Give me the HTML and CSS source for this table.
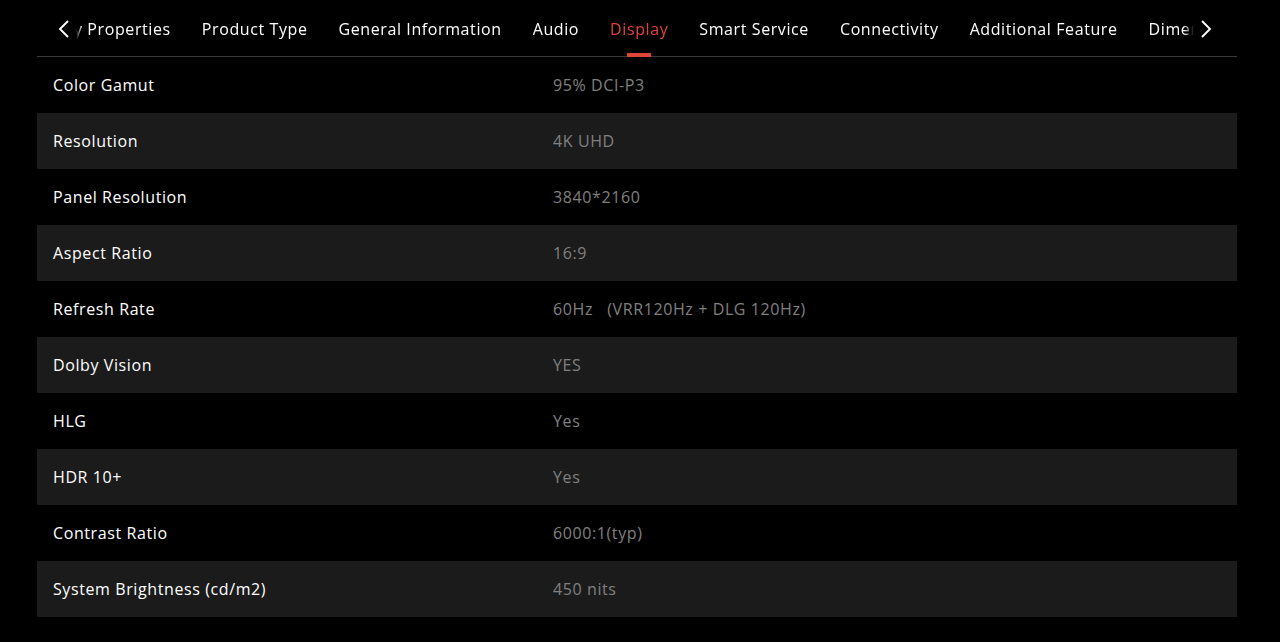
FILE: index.html
```html
<!DOCTYPE html>
<html lang="en">
<head>
<meta charset="utf-8">
<title>Specs - Display</title>
<link rel="stylesheet" href="styles.css">
</head>
<body>
<div class="specs">
  <nav class="tabs">
    <button class="arrow" aria-label="Previous">
      <svg width="14" height="20" viewBox="0 0 14 20"><path d="M11 2 L3 10 L11 18" fill="none" stroke="#fff" stroke-width="1.9"/></svg>
    </button>
    <div class="viewport">
      <ul class="tab-list">
        <li class="tab">Key Properties</li>
        <li class="tab">Product Type</li>
        <li class="tab">General Information</li>
        <li class="tab">Audio</li>
        <li class="tab active">Display</li>
        <li class="tab">Smart Service</li>
        <li class="tab">Connectivity</li>
        <li class="tab">Additional Feature</li>
        <li class="tab">Dimensions</li>
      </ul>
    </div>
    <button class="arrow" aria-label="Next">
      <svg width="14" height="20" viewBox="0 0 14 20"><path d="M3 2 L11 10 L3 18" fill="none" stroke="#fff" stroke-width="1.9"/></svg>
    </button>
  </nav>
  <div class="table">
    <div class="row"><div class="label">Color Gamut</div><div class="value">95% DCI-P3</div></div>
    <div class="row"><div class="label">Resolution</div><div class="value">4K UHD</div></div>
    <div class="row"><div class="label">Panel Resolution</div><div class="value">3840*2160</div></div>
    <div class="row"><div class="label">Aspect Ratio</div><div class="value">16:9</div></div>
    <div class="row"><div class="label">Refresh Rate</div><div class="value">60Hz&nbsp;&nbsp;&nbsp;(VRR120Hz + DLG 120Hz)</div></div>
    <div class="row"><div class="label">Dolby Vision</div><div class="value">YES</div></div>
    <div class="row"><div class="label">HLG</div><div class="value">Yes</div></div>
    <div class="row"><div class="label">HDR 10+</div><div class="value">Yes</div></div>
    <div class="row"><div class="label">Contrast Ratio</div><div class="value">6000:1(typ)</div></div>
    <div class="row"><div class="label">System Brightness (cd/m2)</div><div class="value">450 nits</div></div>
  </div>
</div>
</body>
</html>
```

FILE: styles.css
```css
html, body {
  margin: 0;
  padding: 0;
  background: #000;
}
body {
  font-family: "Open Sans", "Liberation Sans", sans-serif;
  font-size: 16px;
  letter-spacing: 0.6px;
  color: #fff;
  overflow: hidden;
}
.specs {
  width: 1200px;
  margin-left: 37px;
}
.tabs {
  display: flex;
  align-items: center;
  height: 57px;
  border-bottom: 1px solid #3a3a3a;
  box-sizing: border-box;
  padding-left: 15px;
}
.arrow {
  flex: none;
  width: 24px;
  height: 57px;
  padding: 0;
  border: 0;
  background: transparent;
  display: flex;
  align-items: center;
  justify-content: center;
  cursor: pointer;
}
.arrow svg {
  margin-top: 2px;
}
.viewport {
  flex: none;
  width: 1118px;
  height: 57px;
  overflow: hidden;
  -webkit-mask-image: linear-gradient(to right, transparent 0, #000 6px, #000 1108px, transparent 1118px);
  mask-image: linear-gradient(to right, transparent 0, #000 6px, #000 1108px, transparent 1118px);
}
.tab-list {
  list-style: none;
  margin: 0;
  padding: 0;
  display: flex;
  gap: 31px;
  height: 57px;
  transform: translateX(-22px);
}
.tab {
  position: relative;
  flex: none;
  white-space: nowrap;
  line-height: 57px;
  height: 57px;
  padding-top: 1px;
  box-sizing: border-box;
  font-size: 16px;
  color: #fff;
}
.tab.active {
  color: #e0443a;
}
.tab.active::after {
  content: "";
  position: absolute;
  left: 50%;
  bottom: 0;
  width: 24px;
  height: 4px;
  margin-left: -12px;
  background: #e0443a;
}
.table {
  display: flex;
  flex-direction: column;
}
.row {
  display: flex;
  align-items: center;
  height: 56px;
  padding-left: 16px;
}
.row:nth-child(even) {
  background: #1b1b1b;
}
.label {
  width: 500px;
  flex: none;
  color: #fff;
}
.value {
  color: #808080;
}
```
